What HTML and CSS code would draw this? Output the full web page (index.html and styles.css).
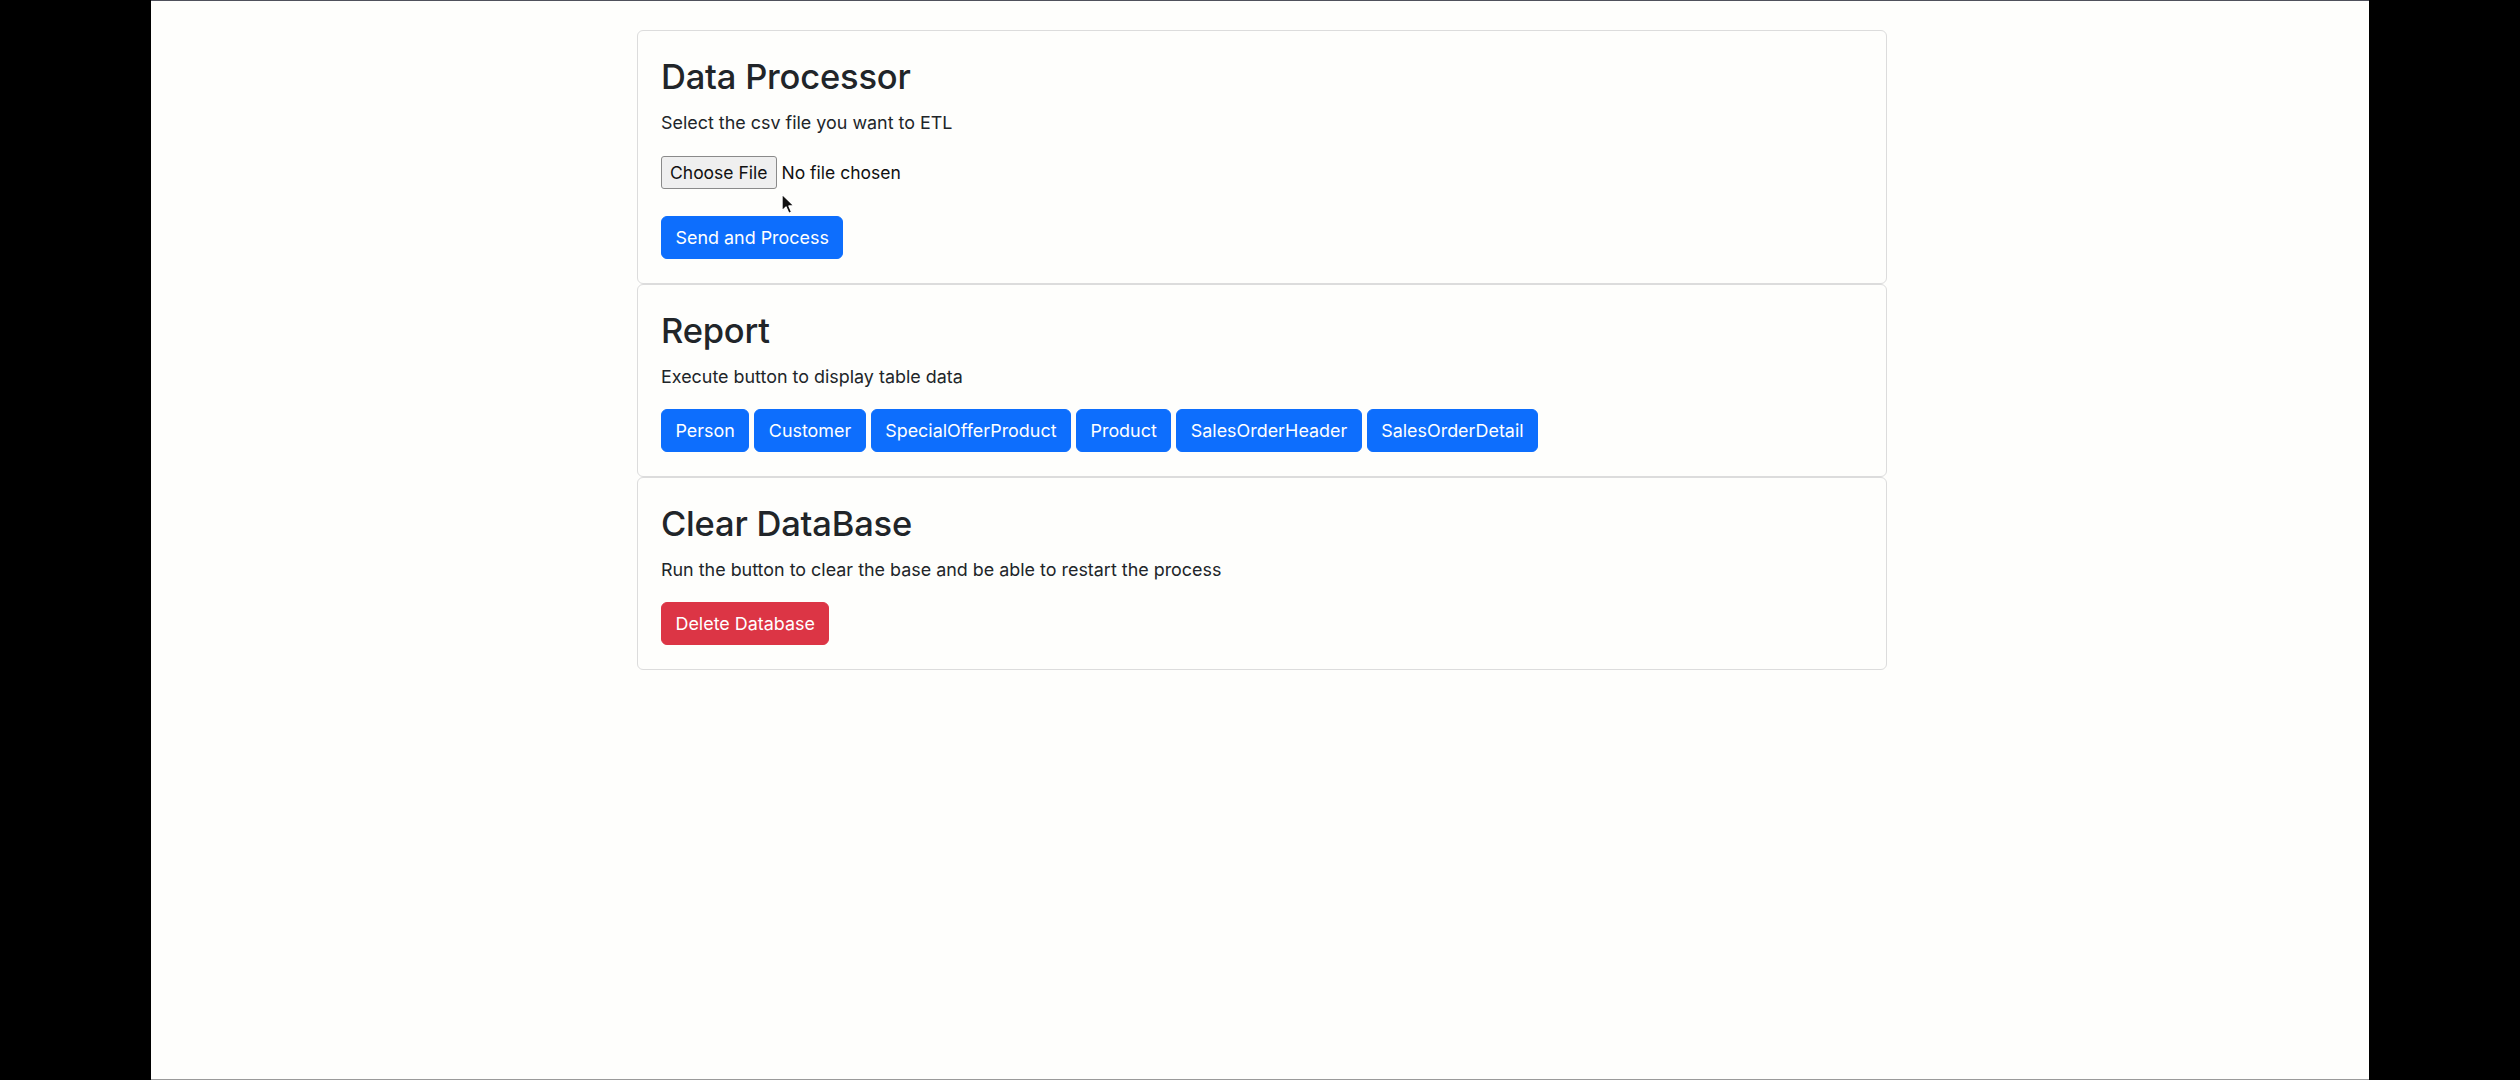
FILE: index.html
```html
<!DOCTYPE html>
<html lang="en">
<head>
<meta charset="utf-8">
<title>Data Processor</title>
<link rel="stylesheet" href="styles.css">
</head>
<body>
<div class="screen">
  <div class="container">
    <section class="card">
      <h2 class="card-title">Data Processor</h2>
      <p class="card-text">Select the csv file you want to ETL</p>
      <div class="file-row">
        <span class="file-btn">Choose File</span>
        <span class="file-name">No file chosen</span>
        <svg class="cursor" width="14" height="22" viewBox="0 0 13 20"><path d="M1 1 L1 16.2 L4.7 12.7 L7.3 18.6 L9.8 17.5 L7.3 11.8 L12 11.8 Z" fill="#111" stroke="#fff" stroke-width="1.1" stroke-linejoin="round"/></svg>
      </div>
      <div class="actions">
        <button class="btn btn-primary">Send and Process</button>
      </div>
    </section>
    <section class="card">
      <h2 class="card-title">Report</h2>
      <p class="card-text">Execute button to display table data</p>
      <div class="actions btn-list">
        <button class="btn btn-primary">Person</button>
        <button class="btn btn-primary">Customer</button>
        <button class="btn btn-primary">SpecialOfferProduct</button>
        <button class="btn btn-primary">Product</button>
        <button class="btn btn-primary">SalesOrderHeader</button>
        <button class="btn btn-primary">SalesOrderDetail</button>
      </div>
    </section>
    <section class="card">
      <h2 class="card-title">Clear DataBase</h2>
      <p class="card-text">Run the button to clear the base and be able to restart the process</p>
      <div class="actions">
        <button class="btn btn-danger">Delete Database</button>
      </div>
    </section>
  </div>
</div>
</body>
</html>
```

FILE: styles.css
```css
* { box-sizing: border-box; }

html, body {
  margin: 0;
  padding: 0;
  background: #000;
}

body {
  font-family: Inter, "Noto Sans", "Liberation Sans", sans-serif;
  color: #212529;
}

.screen {
  width: 2218px;
  height: 1080px;
  margin: 0 auto;
  background: #fefefc;
  border-top: 1px solid #4f515c;
  border-bottom: 1px solid #9a9a9a;
  overflow: hidden;
}

.container {
  width: 1254px;
  margin: 0 auto;
  padding: 29px 0 0 4px;
}

.card {
  border: 1px solid #dcdcdc;
  border-radius: 6px;
  padding: 24px 23px 24px 23px;
  display: flex;
  flex-direction: column;
  align-items: flex-start;
}

.card-title {
  margin: 0 0 11px 0;
  font-size: 34.5px;
  line-height: 43px;
  font-weight: 500;
  letter-spacing: -0.2px;
  color: #212529;
}

.card-text {
  margin: 0 0 19px 0;
  font-size: 17.92px;
  line-height: 27px;
}

.file-row {
  position: relative;
  display: flex;
  align-items: center;
  gap: 5px;
  height: 34px;
  margin-bottom: 27px;
  font-size: 17.5px;
}

.file-btn {
  display: inline-flex;
  align-items: center;
  height: 33px;
  padding: 0 8px;
  background: #efefef;
  border: 1px solid #8a8a8a;
  border-radius: 3px;
  color: #111;
}

.file-name {
  color: #111;
}

.cursor {
  position: absolute;
  left: 120px;
  top: 38px;
}

.btn-list {
  display: flex;
  flex-wrap: wrap;
  gap: 5px;
}

.btn {
  font-family: inherit;
  font-size: 17.92px;
  line-height: 27px;
  padding: 7px 13.5px;
  border: 1px solid transparent;
  border-radius: 6px;
  color: #fff;
  cursor: pointer;
}

.btn-primary {
  background: #0d6efd;
  border-color: #0d6efd;
}

.btn-danger {
  background: #dc3545;
  border-color: #dc3545;
}
```
